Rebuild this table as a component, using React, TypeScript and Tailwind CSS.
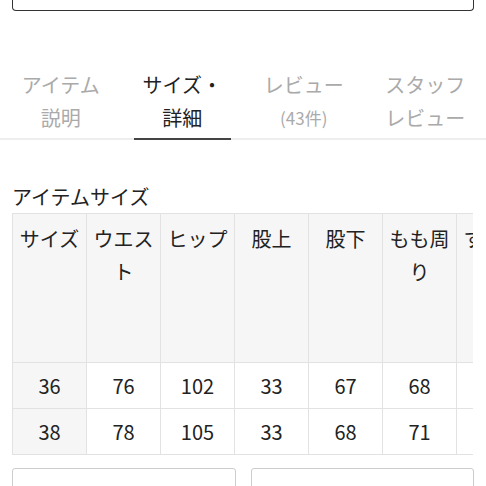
import React from "react";

const headers = ["サイズ", "ウエスト", "ヒップ", "股上", "股下", "もも周り", "すそ周り"];
const rows = [
  ["36", "76", "102", "33", "67", "68", "40"],
  ["38", "78", "105", "33", "68", "71", "41"],
];

const tabs = [
  { l1: "アイテム", l2: "説明", active: false },
  { l1: "サイズ・", l2: "詳細", active: true },
  { l1: "レビュー", l2: "(43件)", active: false, small: true },
  { l1: "スタッフ", l2: "レビュー", active: false },
];

export default function App() {
  return (
    <div className="w-[486px] h-[486px] overflow-hidden bg-white font-['Noto_Sans_CJK_JP','Noto_Sans',sans-serif] text-[#222]">
      <div className="ml-3 w-[462px] h-[11px] border border-t-0 border-[#333] rounded-b-[4px]" />
      <div className="mt-[57px] flex border-b-2 border-[#eee]">
        {tabs.map((t, i) => (
          <div key={i} className="flex-1 px-3 -mb-[2px]">
            <div
              className={`pb-1 border-b-2 text-center text-[20px] leading-[33px] ${
                t.active ? "border-[#444] text-[#222]" : "border-transparent text-[#aaa]"
              }`}
            >
              <div>{t.l1}</div>
              <div className={t.small ? "text-[17px]" : ""}>{t.l2}</div>
            </div>
          </div>
        ))}
      </div>
      <div className="mt-[43px] ml-3 text-[20px] leading-[28px]">アイテムサイズ</div>
      <div className="mt-[2px] ml-3 w-[461px] overflow-hidden">
        <table className="table-fixed border-collapse w-[519px]">
          <colgroup>
            {headers.map((h) => (
              <col key={h} className="w-[74px]" />
            ))}
          </colgroup>
          <thead>
            <tr>
              {headers.map((h) => (
                <th
                  key={h}
                  className="h-[149px] align-top pt-2 px-[5px] font-normal text-[20px] leading-[33px] bg-[#f6f6f6] border border-[#e2e2e2] text-center"
                >
                  {h}
                </th>
              ))}
            </tr>
          </thead>
          <tbody>
            {rows.map((r, ri) => (
              <tr key={ri}>
                {r.map((c, ci) => (
                  <td
                    key={ci}
                    className={`h-[46px] text-center text-[20px] border border-[#e2e2e2] ${
                      ci === 0 ? "bg-[#f6f6f6]" : "bg-white"
                    }`}
                  >
                    {c}
                  </td>
                ))}
              </tr>
            ))}
          </tbody>
        </table>
      </div>
      <div className="mt-[13px] mx-3 flex gap-[15px]">
        <div className="flex-1 h-[40px] border border-[#ccc] rounded-[3px]" />
        <div className="flex-1 h-[40px] border border-[#ccc] rounded-[3px]" />
      </div>
    </div>
  );
}
